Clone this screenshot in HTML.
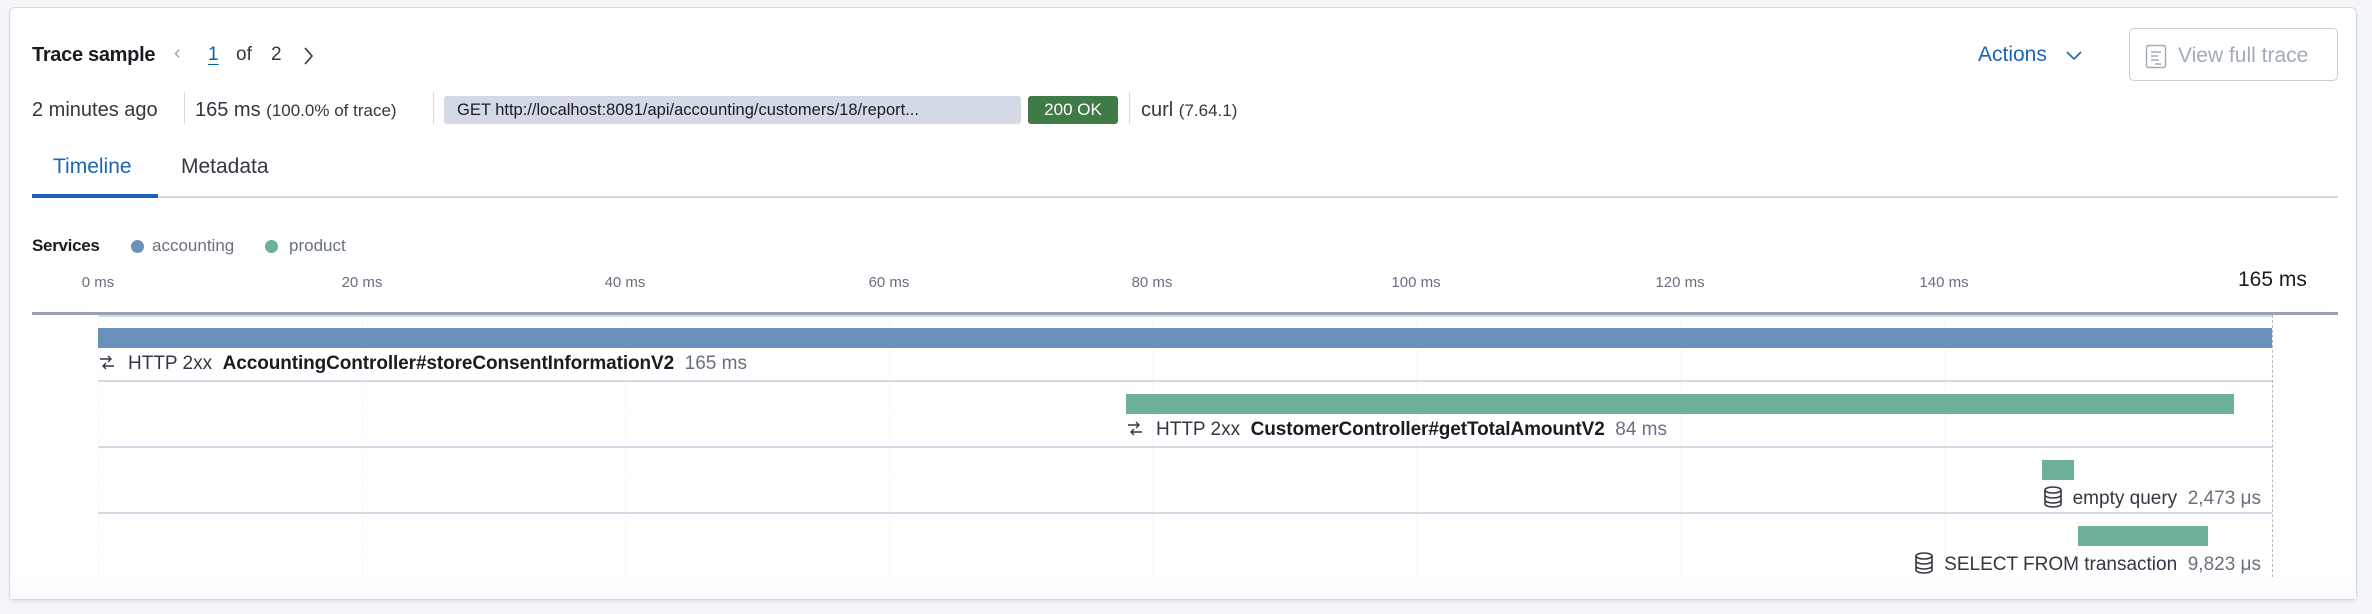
<!DOCTYPE html>
<html><head><meta charset="utf-8"><style>
*{margin:0;padding:0;box-sizing:border-box}
body{width:2372px;height:614px;background:#f4f6f9;font-family:"Liberation Sans",Arial,sans-serif;color:#1a1c21;position:relative;overflow:hidden}
.panel{position:absolute;left:9px;top:7px;width:2348px;height:593px;background:#fff;border:1px solid #d3dae6;border-radius:6px;box-shadow:0 2px 3px rgba(0,0,0,.08)}
.a{position:absolute;white-space:nowrap}
.sep{position:absolute;width:1px;background:#d3dae6}
.grid{position:absolute;top:316px;height:261px;border-left:1px dashed #f3f5f8}
.rowsep{position:absolute;left:98px;width:2174px;height:2px;background:#d3dae6}
.bar{position:absolute;height:20px}
.lbl{position:absolute;white-space:nowrap;font-size:19px;line-height:22px;color:#343741}
.lbl b{color:#1a1c21;letter-spacing:-0.1px}
.lbl .g{color:#69707d}
.ax{position:absolute;top:274px;font-size:15px;color:#69707d;transform:translateX(-50%)}
</style></head><body>
<div class="panel"></div>
<div class="a" style="left:32px;top:44px;font-size:20px;font-weight:bold;letter-spacing:-0.3px">Trace sample</div>
<div class="a" style="left:174px;top:42px;font-size:20px;color:#98a2b3">&#x2039;</div>
<div class="a" style="left:208px;top:44px;font-size:19px;color:#0061a6;text-decoration:underline;text-underline-offset:4px">1</div>
<div class="a" style="left:236px;top:44px;font-size:19px;color:#343741">of</div>
<div class="a" style="left:271px;top:44px;font-size:19px;color:#343741">2</div>
<svg class="a" style="left:302px;top:46px" width="12" height="20"><path d="M3 2 L10 10 L3 18" fill="none" stroke="#343741" stroke-width="1.6"/></svg>

<div class="a" style="left:32px;top:99px;font-size:20px;color:#343741">2 minutes ago</div>
<div class="sep" style="left:184px;top:92px;height:32px"></div>
<div class="a" style="left:195px;top:99px;font-size:20px;color:#343741">165 ms <span style="font-size:17px">(100.0% of trace)</span></div>
<div class="sep" style="left:433px;top:92px;height:32px"></div>
<div class="a" style="left:444px;top:96px;width:577px;height:28px;background:#d3dae6;border-radius:3px;font-size:16.5px;line-height:28px;padding-left:13px;overflow:hidden">GET http://localhost:8081/api/accounting/customers/18/report...</div>
<div class="a" style="left:1028px;top:96px;width:90px;height:28px;background:#3f7a47;border-radius:3px;color:#fff;font-size:17px;line-height:28px;text-align:center">200 OK</div>
<div class="sep" style="left:1129px;top:92px;height:32px"></div>
<div class="a" style="left:1141px;top:99px;font-size:20px;color:#343741">curl <span style="font-size:17px">(7.64.1)</span></div>

<div class="a" style="left:1978px;top:43px;font-size:21px;color:#1d64b3">Actions</div>
<svg class="a" style="left:2066px;top:50px" width="16" height="12"><path d="M1 2 L8 9 L15 2" fill="none" stroke="#1d64b3" stroke-width="1.6"/></svg>
<div class="a" style="left:2129px;top:28px;width:209px;height:53px;border:1.5px solid #c8ced8;border-radius:5px"></div>
<svg class="a" style="left:2145px;top:44px" width="22" height="25"><rect x="1.5" y="1.5" width="19" height="22" rx="2" fill="none" stroke="#a2abba" stroke-width="1.5"/><path d="M6 8h10M6 12h7M6 16h8M10 20h6" stroke="#a2abba" stroke-width="1.5"/></svg>
<div class="a" style="left:2178px;top:44px;font-size:21px;color:#a2abba">View full trace</div>

<div class="a" style="left:53px;top:155px;font-size:21px;color:#1d64b3">Timeline</div>
<div class="a" style="left:181px;top:155px;font-size:21px;color:#343741">Metadata</div>
<div class="a" style="left:32px;top:196px;width:2306px;height:2px;background:#d3dae6"></div>
<div class="a" style="left:32px;top:194px;width:126px;height:4px;background:#1d64b3"></div>

<div class="a" style="left:32px;top:236px;font-size:17px;font-weight:bold;letter-spacing:-0.3px">Services</div>
<div class="a" style="left:131px;top:240px;width:13px;height:13px;border-radius:50%;background:#6a91bb"></div>
<div class="a" style="left:152px;top:236px;font-size:17px;color:#69707d">accounting</div>
<div class="a" style="left:265px;top:240px;width:13px;height:13px;border-radius:50%;background:#6db19a"></div>
<div class="a" style="left:289px;top:236px;font-size:17px;color:#69707d">product</div>

<div class="ax" style="left:98px">0 ms</div>
<div class="ax" style="left:362px">20 ms</div>
<div class="ax" style="left:625px">40 ms</div>
<div class="ax" style="left:889px">60 ms</div>
<div class="ax" style="left:1152px">80 ms</div>
<div class="ax" style="left:1416px">100 ms</div>
<div class="ax" style="left:1680px">120 ms</div>
<div class="ax" style="left:1944px">140 ms</div>
<div class="a" style="left:2238px;top:268px;font-size:21px;color:#1a1c21">165 ms</div>

<div class="a" style="left:32px;top:312px;width:2306px;height:3px;background:#98a2b3"></div>
<div class="a" style="left:98px;top:315px;width:2174px;height:2px;background:#d3dae6"></div>
<div class="grid" style="left:98px"></div><div class="grid" style="left:362px"></div><div class="grid" style="left:625px"></div><div class="grid" style="left:889px"></div><div class="grid" style="left:1152px"></div><div class="grid" style="left:1416px"></div><div class="grid" style="left:1680px"></div><div class="grid" style="left:1944px"></div>
<div class="a" style="left:2272px;top:315px;height:262px;border-left:1px dashed #b0b8c6"></div>

<div class="bar" style="left:98px;top:328px;width:2174px;background:#6a91bb"></div>
<div class="lbl" style="left:98px;top:353px"><svg width="18" height="20" style="vertical-align:-4px;margin-right:12px"><path d="M2 6h11M10 3l3 3-3 3M16 13H5M8 10l-3 3 3 3" fill="none" stroke="#343741" stroke-width="1.4"/></svg>HTTP 2xx &nbsp;<b>AccountingController#storeConsentInformationV2</b> &nbsp;<span class="g">165 ms</span></div>
<div class="rowsep" style="top:380px"></div>

<div class="bar" style="left:1126px;top:394px;width:1108px;background:#6db19a"></div>
<div class="lbl" style="left:1126px;top:419px"><svg width="18" height="20" style="vertical-align:-4px;margin-right:12px"><path d="M2 6h11M10 3l3 3-3 3M16 13H5M8 10l-3 3 3 3" fill="none" stroke="#343741" stroke-width="1.4"/></svg>HTTP 2xx &nbsp;<b>CustomerController#getTotalAmountV2</b> &nbsp;<span class="g">84 ms</span></div>
<div class="rowsep" style="top:446px"></div>

<div class="bar" style="left:2042px;top:460px;width:32px;background:#6db19a"></div>
<div class="lbl" style="right:111px;top:485px"><svg width="20" height="24" style="vertical-align:-5px;margin-right:10px"><ellipse cx="10" cy="5" rx="8" ry="3" fill="none" stroke="#343741" stroke-width="1.6"/><path d="M2 5v14c0 1.7 3.6 3 8 3s8-1.3 8-3V5M2 10c0 1.7 3.6 3 8 3s8-1.3 8-3M2 15c0 1.7 3.6 3 8 3s8-1.3 8-3" fill="none" stroke="#343741" stroke-width="1.6"/></svg>empty query &nbsp;<span class="g">2,473 μs</span></div>
<div class="rowsep" style="top:512px"></div>

<div class="bar" style="left:2078px;top:526px;width:130px;background:#6db19a"></div>
<div class="lbl" style="right:111px;top:551px"><svg width="20" height="24" style="vertical-align:-5px;margin-right:10px"><ellipse cx="10" cy="5" rx="8" ry="3" fill="none" stroke="#343741" stroke-width="1.6"/><path d="M2 5v14c0 1.7 3.6 3 8 3s8-1.3 8-3V5M2 10c0 1.7 3.6 3 8 3s8-1.3 8-3M2 15c0 1.7 3.6 3 8 3s8-1.3 8-3" fill="none" stroke="#343741" stroke-width="1.6"/></svg>SELECT FROM transaction &nbsp;<span class="g">9,823 μs</span></div>
<div class="a" style="left:10px;top:575px;width:2346px;height:24px;background:linear-gradient(rgba(250,251,253,0),#f9fafb)"></div>
</body></html>
